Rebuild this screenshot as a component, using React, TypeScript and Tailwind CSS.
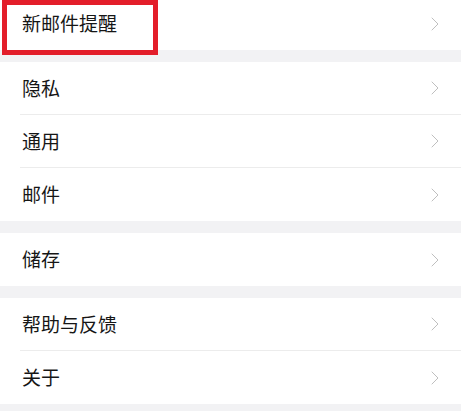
import { ChevronRight } from "lucide-react";

const SECTIONS: string[][] = [
  ["新邮件提醒"],
  ["隐私", "通用", "邮件"],
  ["储存"],
  ["帮助与反馈", "关于"],
];

function Row({ label, last }: { label: string; last: boolean }) {
  return (
    <div className="pl-[20px] bg-white">
      <div
        className={`h-[53px] flex items-center justify-between pl-[2px] pr-[14px] ${
          last ? "" : "border-b border-[#ececec]"
        }`}
      >
        <span className="text-[19px] text-[#161616]">{label}</span>
        <ChevronRight className="w-[24px] h-[24px] text-[#b8b8b8]" strokeWidth={0.9} />
      </div>
    </div>
  );
}

export default function App() {
  return (
    <div
      className="relative w-[461px] h-[411px] overflow-hidden bg-[#f2f2f4]"
      style={{ fontFamily: '"Noto Sans CJK SC", "Noto Sans", sans-serif' }}
    >
      <div className="flex flex-col gap-[12px] -mt-[3px]">
        {SECTIONS.map((rows, i) => (
          <div key={i} className="bg-white">
            {rows.map((label, j) => (
              <Row key={label} label={label} last={j === rows.length - 1} />
            ))}
          </div>
        ))}
      </div>
      <div className="absolute left-[2px] top-0 w-[156px] h-[55px] border-[5px] border-[#e31e2a]" />
    </div>
  );
}
